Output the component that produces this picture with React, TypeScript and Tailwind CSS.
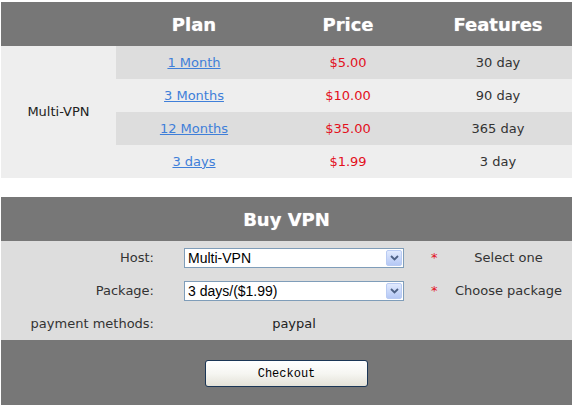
import React from "react";

const rows = [
  { plan: "1 Month", price: "$5.00", feat: "30 day" },
  { plan: "3 Months", price: "$10.00", feat: "90 day" },
  { plan: "12 Months", price: "$35.00", feat: "365 day" },
  { plan: "3 days", price: "$1.99", feat: "3 day" },
];

function Select({ value }: { value: string }) {
  return (
    <div className="w-[220px] h-[20px] border border-[#7f9db9] bg-white flex items-center justify-between pl-[3px] pr-[1px]">
      <span className="text-[14px] text-black leading-none" style={{ fontFamily: '"Liberation Sans", Arial, sans-serif' }}>
        {value}
      </span>
      <div className="w-[16px] h-[16px] rounded-[2px] border border-[#b9cbf3] bg-gradient-to-b from-[#e1eafe] to-[#b5c8f5] flex items-center justify-center">
        <svg width="9" height="6" viewBox="0 0 9 6">
          <path d="M1 1 L4.5 4.5 L8 1" fill="none" stroke="#4d6185" strokeWidth="1.8" />
        </svg>
      </div>
    </div>
  );
}

export default function App() {
  const font = { fontFamily: '"DejaVu Sans", Verdana, sans-serif' };
  const hShadow = { textShadow: "0 0 1px rgba(255,255,255,0.6)" };
  return (
    <div className="bg-white w-[573px] h-[405px] overflow-hidden pt-[2px] pl-[1px]" style={font}>
      <div className="w-[571px]">
        <div className="grid grid-cols-[115px_156px_152px_148px]">
          <div className="bg-[#777777] h-[44px]" />
          <div className="bg-[#777777] h-[44px] flex items-center justify-center text-white font-bold text-[18px]" style={hShadow}>Plan</div>
          <div className="bg-[#777777] h-[44px] flex items-center justify-center text-white font-bold text-[18px]" style={hShadow}>Price</div>
          <div className="bg-[#777777] h-[44px] flex items-center justify-center text-white font-bold text-[18px]" style={hShadow}>Features</div>
          <div className="row-span-4 bg-[#eeeeee] flex items-center justify-center text-[13px] text-[#222]">Multi-VPN</div>
          {rows.map((r, i) => (
            <React.Fragment key={i}>
              <div className={`${i % 2 === 0 ? "bg-[#dddddd]" : "bg-[#eeeeee]"} h-[33px] flex items-center justify-center`}>
                <a href="#" className="text-[13px] text-[#3f7fd9] underline">{r.plan}</a>
              </div>
              <div className={`${i % 2 === 0 ? "bg-[#dddddd]" : "bg-[#eeeeee]"} h-[33px] flex items-center justify-center text-[13px] text-[#e3101c]`}>{r.price}</div>
              <div className={`${i % 2 === 0 ? "bg-[#dddddd]" : "bg-[#eeeeee]"} h-[33px] flex items-center justify-center text-[13px] text-[#333]`}>{r.feat}</div>
            </React.Fragment>
          ))}
        </div>

        <div className="mt-[19px]">
          <div className="bg-[#777777] h-[44px] flex items-center justify-center text-white font-bold text-[18px]" style={hShadow}>Buy VPN</div>
          <div className="bg-[#dddddd] grid grid-cols-[159px_268px_17px_127px] text-[13px] text-[#333]">
            <div className="h-[33px] flex items-center justify-end pr-[6px]">Host:</div>
            <div className="h-[33px] flex items-center justify-center"><Select value="Multi-VPN" /></div>
            <div className="h-[33px] flex items-center text-[#e3101c] pl-[3px]">*</div>
            <div className="h-[33px] flex items-center justify-center">Select one</div>

            <div className="h-[33px] flex items-center justify-end pr-[6px]">Package:</div>
            <div className="h-[33px] flex items-center justify-center"><Select value="3 days/($1.99)" /></div>
            <div className="h-[33px] flex items-center text-[#e3101c] pl-[3px]">*</div>
            <div className="h-[33px] flex items-center justify-center">Choose package</div>

            <div className="h-[33px] flex items-center justify-end pr-[6px]">payment methods:</div>
            <div className="h-[33px] flex items-center justify-center text-[#222]">paypal</div>
            <div className="h-[33px]" />
            <div className="h-[33px]" />
          </div>
          <div className="bg-[#777777] h-[80px] flex justify-center pt-[20px]">
            <button className="w-[163px] h-[27px] rounded-[3px] border border-[#1b3656] bg-gradient-to-b from-[#ffffff] via-[#f6f6f2] to-[#e4e2d8] text-[12px] text-black" style={{ fontFamily: '"Liberation Mono", "Courier New", monospace' }}>
              Checkout
            </button>
          </div>
        </div>
      </div>
    </div>
  );
}
